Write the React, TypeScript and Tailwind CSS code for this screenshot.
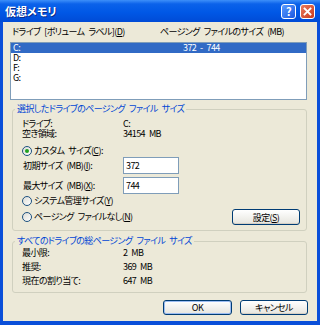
import type { ReactNode } from "react";

const font = "font-['MS_UI_Gothic','Noto_Sans_CJK_JP',sans-serif] [font-feature-settings:'palt']";

function U({ children }: { children: ReactNode }) {
  return <span className="underline underline-offset-[1px]">{children}</span>;
}

function Radio({ checked, children }: { checked?: boolean; children: ReactNode }) {
  return (
    <div className="flex h-[12px] items-center gap-[2px]">
      <span className="flex h-[10px] w-[10px] items-center justify-center rounded-full border border-[#1c5180] bg-gradient-to-br from-[#dcdcd5] to-white">
        {checked && <span className="h-[4px] w-[4px] rounded-full bg-[#21a121]" />}
      </span>
      <span>{children}</span>
    </div>
  );
}

function XpButton({ children, isDefault, className }: { children: ReactNode; isDefault?: boolean; className?: string }) {
  return (
    <button
      className={`flex h-[15px] items-center justify-center rounded-[3px] border border-[#003c74] bg-gradient-to-b from-white to-[#e6e5de] leading-none text-black ${
        isDefault ? "shadow-[inset_0_0_0_1px_#9cbdf2]" : "shadow-[inset_0_-1px_0_#d6d0c5]"
      } ${className ?? ""}`}
    >
      {children}
    </button>
  );
}

function GroupBox({ title, children, className }: { title: string; children: ReactNode; className?: string }) {
  return (
    <fieldset className={`ml-[9px] w-[295px] rounded-[3px] border border-[#d0d0bf] p-0 ${className ?? ""}`}>
      <legend className="ml-[2px] h-[10px] px-[2px] leading-[10px] text-[#0046d5]">{title}</legend>
      {children}
    </fieldset>
  );
}

const drives = [
  { name: "C:", size: "372 - 744", selected: true },
  { name: "D:", size: "" },
  { name: "F:", size: "" },
  { name: "G:", size: "" },
];

export default function App() {
  return (
    <div
      className={`flex h-[325px] w-[320px] flex-col bg-[#0a4fd9] text-[9px] leading-[10px] tracking-[-0.6px] [word-spacing:2.5px] text-black ${font}`}
    >
      {/* title bar */}
      <div className="flex h-[22px] items-center bg-[linear-gradient(to_bottom,#3d8ff9_0%,#0b62ea_18%,#0058e6_55%,#004bd6_100%)] pl-[5px] pr-[5px]">
        <span className="flex-1 text-[11px] font-bold leading-none tracking-normal text-white [text-shadow:1px_1px_0_#0a2a8a]">仮想メモリ</span>
        <div className="flex gap-[4px]">
          <span className="flex h-[15px] w-[15px] items-center justify-center rounded-[3px] border border-white bg-gradient-to-br from-[#5a9bff] to-[#1a56e0] text-[11px] font-bold leading-none text-white">
            ?
          </span>
          <span className="flex h-[15px] w-[15px] items-center justify-center rounded-[3px] border border-white bg-gradient-to-br from-[#e9795c] to-[#c8381a]">
            <svg width="9" height="9" viewBox="0 0 9 9">
              <path d="M1.5 1.5L7.5 7.5M7.5 1.5L1.5 7.5" stroke="white" strokeWidth="1.8" strokeLinecap="square" />
            </svg>
          </span>
        </div>
      </div>

      {/* body */}
      <div className="mx-[3px] mb-[4px] flex flex-1 flex-col bg-[#ece9d8]">
        <div className="mt-[5px] flex h-[10px] pl-[9px]">
          <span className="w-[148px]">
            ドライブ [ボリューム ラベル](<U>D</U>)
          </span>
          <span>ページング ファイルのサイズ (MB)</span>
        </div>

        <div className="ml-[7px] mt-[5px] h-[58px] w-[297px] border border-[#7f9db9] bg-white">
          {drives.map((d) => (
            <div
              key={d.name}
              className={`flex h-[10px] leading-[10px] ${d.selected ? "bg-[#316ac5] text-white" : ""}`}
            >
              <span className="w-[172px] pl-[2px]">{d.name}</span>
              <span>{d.size}</span>
            </div>
          ))}
        </div>

        <GroupBox title="選択したドライブのページング ファイル サイズ" className="mt-[4px]">
          <div className="flex flex-col pb-[5px] pl-[9px] pr-[6px] pt-[5px]">
            <div className="flex h-[10px]">
              <span className="w-[101px]">ドライブ:</span>
              <span>C:</span>
            </div>
            <div className="flex h-[10px]">
              <span className="w-[101px]">空き領域:</span>
              <span>34154 MB</span>
            </div>
            <div className="mt-[6px]">
              <Radio checked>
                カスタム サイズ(<U>C</U>):
              </Radio>
            </div>
            <div className="flex h-[17px] items-center">
              <span className="w-[101px] pl-[1px]">
                初期サイズ (MB)(<U>I</U>):
              </span>
              <div className="flex h-[17px] w-[56px] items-center border border-[#7f9db9] bg-white pl-[2px]">372</div>
            </div>
            <div className="mt-[3px] flex h-[17px] items-center">
              <span className="w-[101px] pl-[1px]">
                最大サイズ (MB)(<U>X</U>):
              </span>
              <div className="flex h-[17px] w-[56px] items-center border border-[#7f9db9] bg-white pl-[2px]">744</div>
            </div>
            <div className="mt-[1px]">
              <Radio>
                システム管理サイズ(<U>Y</U>)
              </Radio>
            </div>
            <div className="mt-[2px] flex h-[16px] items-center justify-between">
              <Radio>
                ページング ファイルなし(<U>N</U>)
              </Radio>
              <XpButton className="h-[16px] w-[68px]">
                設定(<U>S</U>)
              </XpButton>
            </div>
          </div>
        </GroupBox>

        <GroupBox title="すべてのドライブの総ページング ファイル サイズ" className="mt-[5px]">
          <div className="flex flex-col pb-[4px] pl-[9px]">
            {[
              ["最小限:", "2 MB"],
              ["推奨:", "369 MB"],
              ["現在の割り当て:", "647 MB"],
            ].map(([k, v]) => (
              <div key={k} className="flex h-[14px] items-center">
                <span className="w-[101px]">{k}</span>
                <span>{v}</span>
              </div>
            ))}
          </div>
        </GroupBox>

        <div className="mr-[9px] mt-[7px] flex justify-end gap-[8px]">
          <XpButton isDefault className="w-[69px]">
            OK
          </XpButton>
          <XpButton className="w-[68px]">キャンセル</XpButton>
        </div>
      </div>
    </div>
  );
}
